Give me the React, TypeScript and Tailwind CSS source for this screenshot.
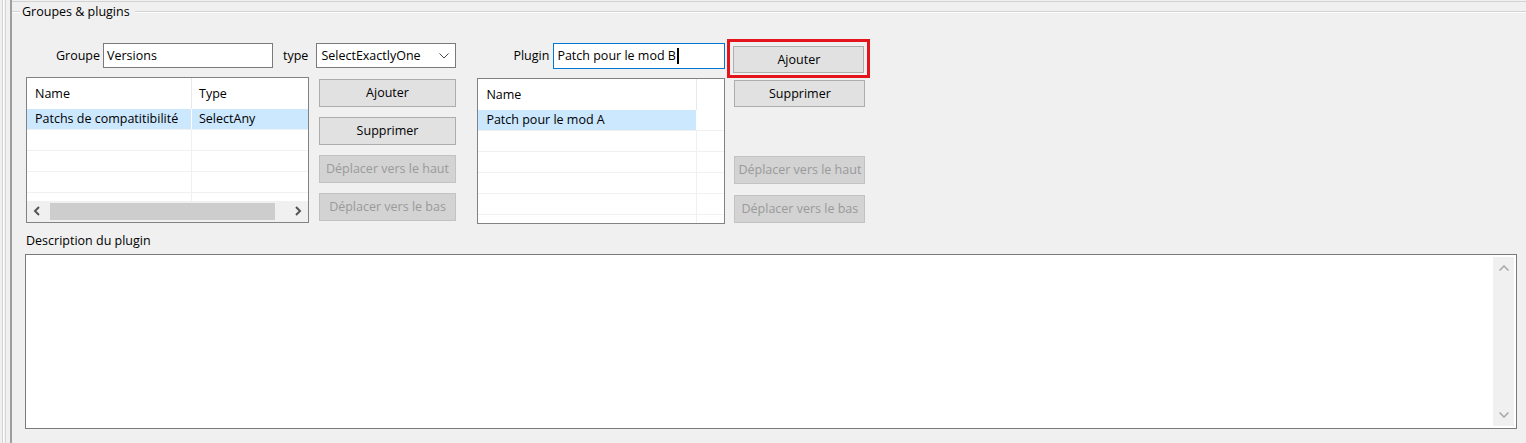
import React from "react";

const Btn = ({ label, w, h, disabled }: { label: string; w: string; h: string; disabled?: boolean }) => (
  <div
    className={
      "flex items-center justify-center overflow-hidden whitespace-nowrap border " +
      w +
      " " +
      h +
      " " +
      (disabled ? "bg-[#d3d3d3] border-[#c3c3c3] text-[#9a9a9a]" : "bg-[#e1e1e1] border-[#adadad] text-black")
    }
  >
    <span className="shrink-0">{label}</span>
  </div>
);

const ChevronLeft = () => (
  <svg width="8" height="10" viewBox="0 0 8 10">
    <path d="M6 1 L2 5 L6 9" fill="none" stroke="#555" strokeWidth="2" />
  </svg>
);
const ChevronRight = () => (
  <svg width="8" height="10" viewBox="0 0 8 10">
    <path d="M2 1 L6 5 L2 9" fill="none" stroke="#555" strokeWidth="2" />
  </svg>
);

export default function App() {
  return (
    <div className="w-[1526px] h-[443px] bg-[#f0f0f0] flex overflow-hidden text-[12.5px] leading-[16px] text-black font-['Open_Sans',sans-serif]">
      {/* left edge lines */}
      <div className="flex h-full shrink-0">
        <div className="w-[2px]" />
        <div className="w-px bg-[#d2d2d2]" />
        <div className="w-px bg-white" />
        <div className="w-px" />
        <div className="w-px bg-[#d8d8d8]" />
        <div className="w-[4px]" />
        <div className="w-[2px] bg-[#9e9e9e]" />
      </div>

      <div className="flex-1 flex flex-col min-w-0">
        <div className="h-px mt-px bg-[#d3d3d3]" />
        <div className="h-[2px]" />
        {/* group title */}
        <div className="flex items-center h-[16px]">
          <div className="w-[8px] flex flex-col">
            <div className="h-px bg-[#d3d3d3]" />
            <div className="h-px bg-white" />
          </div>
          <span className="pl-[2px] pr-[5px]">Groupes &amp; plugins</span>
          <div className="flex-1 flex flex-col">
            <div className="h-px bg-[#d3d3d3]" />
            <div className="h-px bg-white" />
          </div>
        </div>

        {/* main content row */}
        <div className="flex items-start mt-[19px] pl-[14px]">
          {/* left group */}
          <div className="flex flex-col mt-[4px]">
            <div className="flex items-center h-[25px]">
              <div className="w-[77px] text-right pr-[3px]">Groupe</div>
              <div className="w-[170px] h-[25px] bg-white border border-[#7a7a7a] flex items-center pl-[3px]">Versions</div>
              <div className="ml-[10px]">type</div>
              <div className="ml-[8px] w-[140px] h-[25px] bg-white border border-[#7a7a7a] flex items-center pl-[4px] pr-[6px] justify-between">
                <span>SelectExactlyOne</span>
                <svg width="10" height="6" viewBox="0 0 10 6">
                  <path d="M0.5 0.5 L5 5 L9.5 0.5" fill="none" stroke="#444" strokeWidth="1" />
                </svg>
              </div>
            </div>
            <div className="flex items-start mt-[9px]">
              {/* left list */}
              <div className="w-[283px] h-[146px] bg-white border border-[#828282] flex flex-col overflow-hidden">
                <div className="flex-1 overflow-hidden">
                  <div className="flex h-[31px]">
                    <div className="w-[165px] pl-[8px] flex items-center border-r border-[#e8e8e8]">Name</div>
                    <div className="flex-1 pl-[7px] flex items-center">Type</div>
                  </div>
                  <div className="flex h-[21px] border-b border-[#f0f0f0]">
                    <div className="w-[165px] pl-[8px] flex items-center bg-[#cce8ff] border-r border-white whitespace-nowrap overflow-hidden">Patchs de compatitibilité</div>
                    <div className="flex-1 pl-[7px] flex items-center bg-[#cce8ff]">SelectAny</div>
                  </div>
                  {[0, 1, 2, 3].map((i) => (
                    <div key={i} className="flex h-[21px] border-b border-[#f0f0f0]">
                      <div className="w-[165px] border-r border-[#f0f0f0]" />
                      <div className="flex-1" />
                    </div>
                  ))}
                </div>
                <div className="h-[21px] bg-[#f0f0f0] flex items-center pb-[1px]">
                  <div className="w-[20px] flex justify-center">
                    <ChevronLeft />
                  </div>
                  <div className="ml-[3px] w-[225px] h-[17px] bg-[#cdcdcd]" />
                  <div className="flex-1" />
                  <div className="w-[20px] flex justify-center">
                    <ChevronRight />
                  </div>
                </div>
              </div>
              {/* left buttons */}
              <div className="ml-[10px] mt-[2px] flex flex-col gap-[10px]">
                <Btn label="Ajouter" w="w-[137px]" h="h-[28px]" />
                <Btn label="Supprimer" w="w-[137px]" h="h-[28px]" />
                <Btn label="Déplacer vers le haut" w="w-[137px]" h="h-[28px]" disabled />
                <Btn label="Déplacer vers le bas" w="w-[137px]" h="h-[28px]" disabled />
              </div>
            </div>
          </div>

          {/* right group */}
          <div className="flex items-start ml-[21px]">
            <div className="flex flex-col w-[248px] mt-[4px]">
              <div className="flex items-center h-[26px]">
                <div className="w-[76px] text-right pr-[4px]">Plugin</div>
                <div className="w-[172px] h-[26px] bg-white border border-[#0078d7] flex items-center pl-[3px]">
                  <span>Patch pour le mod B</span>
                  <span className="w-[2px] h-[16px] bg-black ml-px" />
                </div>
              </div>
              <div className="mt-[9px] w-[248px] h-[146px] bg-white border border-[#828282] overflow-hidden">
                <div className="flex h-[31px]">
                  <div className="w-[219px] pl-[8px] flex items-center border-r border-[#e8e8e8]">Name</div>
                  <div className="flex-1" />
                </div>
                <div className="flex h-[21px] border-b border-[#f0f0f0]">
                  <div className="w-[219px] pl-[8px] flex items-center bg-[#cce8ff] border-r border-white">Patch pour le mod A</div>
                  <div className="flex-1" />
                </div>
                {[0, 1, 2, 3, 4].map((i) => (
                  <div key={i} className="flex h-[21px] border-b border-[#f0f0f0]">
                    <div className="w-[219px] border-r border-[#f0f0f0]" />
                    <div className="flex-1" />
                  </div>
                ))}
              </div>
            </div>
            <div className="flex flex-col ml-[2px]">
              <div className="border-[3px] border-[#e3141b] px-[3px] pt-[4px] pb-[2px]">
                <Btn label="Ajouter" w="w-[131px]" h="h-[27px]" />
              </div>
              <div className="ml-[7px] mt-[2px] flex flex-col">
                <Btn label="Supprimer" w="w-[131px]" h="h-[27px]" />
                <div className="mt-[49px]">
                  <Btn label="Déplacer vers le haut" w="w-[131px]" h="h-[28px]" disabled />
                </div>
                <div className="mt-[11px]">
                  <Btn label="Déplacer vers le bas" w="w-[131px]" h="h-[28px]" disabled />
                </div>
              </div>
            </div>
          </div>
        </div>

        {/* description */}
        <div className="ml-[14px] mt-[9px]">Description du plugin</div>
        <div className="ml-[13px] mt-[5px] w-[1492px] h-[175px] bg-white border border-[#7a7a7a] p-[2px] flex justify-end">
          <div className="w-[21px] h-full bg-[#f0f0f0] flex flex-col items-center justify-between py-[8px]">
            <svg width="10" height="6" viewBox="0 0 10 6">
              <path d="M0.5 5.5 L5 1 L9.5 5.5" fill="none" stroke="#a6a6a6" strokeWidth="1.5" />
            </svg>
            <svg width="10" height="6" viewBox="0 0 10 6">
              <path d="M0.5 0.5 L5 5 L9.5 0.5" fill="none" stroke="#a6a6a6" strokeWidth="1.5" />
            </svg>
          </div>
        </div>
      </div>
    </div>
  );
}
